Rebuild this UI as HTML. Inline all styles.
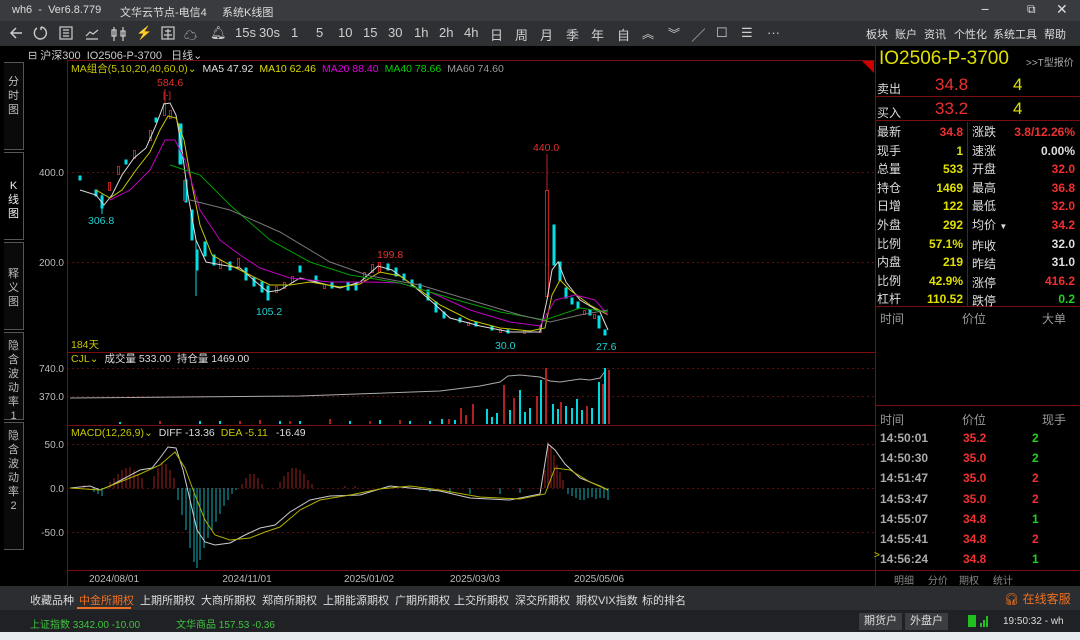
<!DOCTYPE html>
<html><head><meta charset="utf-8"><style>
*{margin:0;padding:0;box-sizing:border-box}
body{width:1080px;height:640px;background:#000;overflow:hidden;font-family:"Liberation Sans","Noto Sans CJK SC",sans-serif;position:relative;color:#ccc}
.a{position:absolute;white-space:nowrap}
#title{left:0;top:0;width:1080px;height:21px;background:#393b3f;font-size:11px;color:#ddd}
#tool{left:0;top:21px;width:1080px;height:25px;background:#2e3033;font-size:13px;color:#cfcfcf}
.tb{position:absolute;top:4px}
.rt{position:absolute;top:5px;font-size:11px;color:#ddd}
#tabs2{left:0;top:586px;width:1080px;height:24px;background:#2b2d30;font-size:11px;color:#ddd}
#stat{left:0;top:610px;width:1080px;height:22px;background:#1f2124;font-size:10px;color:#3fc43f}
.vt{position:absolute;left:4px;width:20px;font-size:11px;color:#bbb;text-align:center;line-height:14px;border:1px solid #555;border-left:none;background:#0a0a0a}
.r{position:absolute;font-size:12px}
</style></head><body>
<div class="a" id="title">
 <span class="a" style="left:12px;top:4px">wh6 &nbsp;- &nbsp;Ver6.8.779</span>
 <span class="a" style="left:120px;top:4px">文华云节点-电信4</span>
 <span class="a" style="left:222px;top:4px">系统K线图</span>
 <span class="a" style="left:981px;top:1px;font-size:14px">−</span>
 <span class="a" style="left:1027px;top:2px;font-size:12px">⧉</span>
 <span class="a" style="left:1056px;top:1px;font-size:14px">✕</span>
</div>
<div class="a" id="tool">
 <svg class="a" style="left:8px;top:4px" width="16" height="16" fill="none" stroke="#ccc" stroke-width="1.5"><path d="M14 8H3M8 3L3 8l5 5"/></svg>
 <svg class="a" style="left:32px;top:4px" width="16" height="16" fill="none" stroke="#ccc" stroke-width="1.4"><path d="M5 3A6 6 0 1 0 9 2M9 2v3"/></svg>
 <svg class="a" style="left:58px;top:4px" width="16" height="16" fill="none" stroke="#ccc" stroke-width="1.2"><rect x="2" y="2" width="12" height="12"/><path d="M5 5h6M5 8h6M5 11h6"/></svg>
 <svg class="a" style="left:84px;top:4px" width="16" height="16" fill="none" stroke="#ccc" stroke-width="1.2"><path d="M2 11l4-4 3 2 5-4M2 14h12"/></svg>
 <svg class="a" style="left:110px;top:4px" width="18" height="16" fill="none" stroke="#ccc" stroke-width="1.2"><rect x="2" y="5" width="4" height="6"/><path d="M4 2v14M13 2v14"/><rect x="11" y="6" width="4" height="5"/></svg>
 <span class="tb" style="left:136px">⚡</span>
 <svg class="a" style="left:160px;top:4px" width="16" height="16" fill="none" stroke="#ccc" stroke-width="1.2"><rect x="2" y="2" width="12" height="12"/><path d="M5 6h6M8 4v10M4 10h8"/></svg>
 <span class="tb" style="left:184px">☁</span>
 <span class="tb" style="left:210px">🔔︎</span>
 <span class="tb" style="left:235px">15s</span><span class="tb" style="left:259px">30s</span><span class="tb" style="left:291px">1</span><span class="tb" style="left:316px">5</span><span class="tb" style="left:338px">10</span><span class="tb" style="left:363px">15</span><span class="tb" style="left:388px">30</span><span class="tb" style="left:414px">1h</span><span class="tb" style="left:439px">2h</span><span class="tb" style="left:464px">4h</span><span class="tb" style="left:490px">日</span><span class="tb" style="left:515px">周</span><span class="tb" style="left:540px">月</span><span class="tb" style="left:566px">季</span><span class="tb" style="left:591px">年</span><span class="tb" style="left:617px">自</span>
 <span class="tb" style="left:642px;font-size:12px">︽</span><span class="tb" style="left:668px;font-size:12px">︾</span><span class="tb" style="left:692px">╱</span><span class="tb" style="left:716px">☐</span><span class="tb" style="left:741px">☰</span><span class="tb" style="left:767px">···</span>
 <span class="rt" style="left:866px">板块</span><span class="rt" style="left:895px">账户</span><span class="rt" style="left:924px">资讯</span><span class="rt" style="left:954px">个性化</span><span class="rt" style="left:993px">系统工具</span><span class="rt" style="left:1044px">帮助</span>
</div>
<div class="a" style="left:28px;top:47px;font-size:11px;color:#ccc">⊟ 沪深300 &nbsp;IO2506-P-3700 &nbsp;&nbsp;日线⌄</div>
<div class="vt" style="top:62px;height:88px;padding-top:12px">分<br>时<br>图</div>
<div class="vt" style="top:152px;height:88px;padding-top:26px;color:#eee;background:#000">K<br>线<br>图</div>
<div class="vt" style="top:242px;height:88px;padding-top:24px">释<br>义<br>图</div>
<div class="vt" style="top:332px;height:88px;padding-top:6px">隐<br>含<br>波<br>动<br>率<br>1</div>
<div class="vt" style="top:422px;height:128px;padding-top:6px">隐<br>含<br>波<br>动<br>率<br>2</div>
<svg class="a" style="left:0;top:0" width="1080" height="640" font-family="Liberation Sans, Noto Sans CJK SC, sans-serif">
 <g stroke="#7a0d0d" fill="none">
  <path d="M67.5 60V586M67.5 60.5H875M875.5 46V586M67 352.5H875M67 425.5H875M67 570.5H875"/>
  <path d="M875 306.5H1080M875 405.5H1080M875 96.5H1080M875 120.5H1080M967.5 122V306M875 570.5H1080"/>
 </g>
 <g stroke="#5a1010" stroke-dasharray="2 3"><path d="M67 172.5H875M67 262.5H875M67 368.5H875M67 396.5H875M67 444.5H875M67 488.5H875M67 532.5H875"/></g>
 <path d="M862 61h12v12z" fill="#c00"/>
 <g font-size="10" fill="#bbb" text-anchor="end"><text x="64" y="176">400.0</text><text x="64" y="266">200.0</text><text x="64" y="372">740.0</text><text x="64" y="400">370.0</text><text x="64" y="448">50.0</text><text x="64" y="492">0.0</text><text x="64" y="536">-50.0</text></g>
 <g font-size="10" fill="#bbb" text-anchor="middle"><text x="114" y="582">2024/08/01</text><text x="247" y="582">2024/11/01</text><text x="369" y="582">2025/01/02</text><text x="475" y="582">2025/03/03</text><text x="599" y="582">2025/05/06</text></g>
 <text x="71" y="72" font-size="10.5"><tspan fill="#c8c800">MA组合(5,10,20,40,60,0)⌄</tspan><tspan fill="#ddd" dx="6">MA5 47.92</tspan><tspan fill="#dddd00" dx="6">MA10 62.46</tspan><tspan fill="#e000e0" dx="6">MA20 88.40</tspan><tspan fill="#00d000" dx="6">MA40 78.66</tspan><tspan fill="#999" dx="6">MA60 74.60</tspan></text>
 <text x="71" y="348" font-size="10.5" fill="#c8c800">184天</text>
 <text x="71" y="362" font-size="10.5"><tspan fill="#c8c800">CJL⌄</tspan><tspan fill="#ddd" dx="6">成交量 533.00 &#160;持仓量 1469.00</tspan></text>
 <text x="71" y="436" font-size="10.5"><tspan fill="#c8c800">MACD(12,26,9)⌄</tspan><tspan fill="#ddd" dx="6">DIFF -13.36</tspan><tspan fill="#c8c800" dx="6">DEA -5.11</tspan><tspan fill="#ddd" dx="8">-16.49</tspan></text>
 <g font-size="10.5"><text x="157" y="86" fill="#e03030">584.6</text><text x="163" y="98" fill="#e03030" font-size="9">[-]</text><text x="88" y="224" fill="#20d0d0">306.8</text><text x="256" y="315" fill="#20d0d0">105.2</text><text x="377" y="258" fill="#e03030">199.8</text><text x="533" y="151" fill="#e03030">440.0</text><text x="495" y="349" fill="#20d0d0">30.0</text><text x="596" y="350" fill="#20d0d0">27.6</text></g>
 <g fill="#00e0e8" stroke="#00e0e8" stroke-width="1">
  <rect x="79" y="176" width="2" height="4"/><rect x="95" y="190" width="2" height="6"/><rect x="101" y="196" width="2" height="12"/><path d="M102 194V214"/>
  <rect x="125" y="160" width="2" height="4"/><rect x="155" y="118" width="2" height="4"/>
  <rect x="179" y="124" width="3" height="40"/><rect x="185" y="180" width="2" height="22"/><rect x="191" y="210" width="2" height="30"/><rect x="196" y="250" width="2" height="20"/><path d="M196 240V296"/>
  <rect x="204" y="242" width="2" height="14"/><rect x="213" y="255" width="2" height="10"/><rect x="229" y="262" width="2" height="8"/><rect x="245" y="268" width="2" height="12"/><rect x="253" y="278" width="2" height="8"/><rect x="261" y="282" width="2" height="10"/><rect x="267" y="286" width="2" height="14"/>
  <rect x="299" y="266" width="2" height="6"/><rect x="315" y="276" width="2" height="6"/><rect x="331" y="282" width="2" height="6"/><rect x="347" y="282" width="2" height="8"/><rect x="355" y="284" width="2" height="6"/>
  <rect x="387" y="264" width="2" height="6"/><rect x="395" y="268" width="2" height="8"/><rect x="403" y="274" width="2" height="6"/><rect x="411" y="280" width="2" height="6"/><rect x="419" y="284" width="2" height="6"/><rect x="427" y="290" width="2" height="10"/><rect x="435" y="302" width="2" height="10"/><rect x="443" y="312" width="2" height="6"/><rect x="459" y="318" width="2" height="4"/><rect x="475" y="322" width="2" height="4"/><rect x="491" y="326" width="2" height="4"/><rect x="507" y="330" width="2" height="3"/>
  <rect x="553" y="225" width="2" height="40"/><rect x="559" y="262" width="2" height="18"/><rect x="565" y="288" width="2" height="10"/><rect x="571" y="298" width="2" height="6"/><rect x="577" y="302" width="2" height="6"/><rect x="589" y="310" width="2" height="5"/><rect x="598" y="316" width="2" height="12"/><rect x="604" y="330" width="2" height="5"/>
 </g>
 <g fill="none" stroke="#c02020" stroke-width="1">
  <rect x="108.5" y="182.5" width="2" height="8"/><rect x="117.5" y="166.5" width="2" height="8"/><rect x="133.5" y="150.5" width="2" height="8"/><rect x="149.5" y="130.5" width="2" height="10"/><rect x="163.5" y="103.5" width="2" height="12"/><path d="M165 89V104"/><rect x="169.5" y="110.5" width="2" height="8"/>
  <rect x="183.5" y="180.5" width="2" height="20"/><rect x="219.5" y="260.5" width="2" height="8"/><rect x="237.5" y="258.5" width="2" height="8"/>
  <rect x="275.5" y="286.5" width="2" height="6"/><rect x="283.5" y="282.5" width="2" height="6"/><rect x="291.5" y="276.5" width="2" height="6"/><rect x="323.5" y="284.5" width="2" height="4"/><rect x="363.5" y="272.5" width="2" height="8"/><rect x="371.5" y="264.5" width="2" height="8"/><rect x="378.5" y="262.5" width="2" height="10"/>
  <rect x="467.5" y="322.5" width="2" height="3"/><rect x="499.5" y="329.5" width="2" height="3"/><rect x="523.5" y="330.5" width="2" height="3"/><rect x="539.5" y="326.5" width="2" height="6"/>
  <rect x="545.5" y="190.5" width="3" height="106"/><path d="M547 154V190"/><rect x="583.5" y="310.5" width="2" height="4"/><rect x="593.5" y="314.5" width="2" height="4"/>
 </g>
 <g fill="none" stroke-width="1">
  <polyline stroke="#dcdcdc" points="80,190 96,195 104,205 112,195 122,175 134,158 146,148 156,125 164,104 170,103 176,115 182,150 188,195 196,240 206,262 222,265 240,268 256,282 268,292 280,290 300,278 320,283 340,288 360,282 378,266 392,270 410,283 430,300 450,318 480,326 510,332 540,332 547,300 552,270 558,262 566,282 580,300 600,312 608,330"/>
  <polyline stroke="#c8c800" points="96,190 110,198 122,190 136,170 150,152 160,130 168,116 176,118 184,140 192,185 200,225 212,255 230,265 250,275 270,285 290,285 310,282 340,287 360,284 380,272 400,276 420,290 440,305 470,320 500,328 530,331 545,328 552,295 560,280 570,290 590,305 608,315"/>
  <polyline stroke="#c000c0" points="110,200 130,190 150,170 165,140 175,140 185,160 200,210 220,240 240,255 260,268 290,278 330,282 370,282 400,283 430,292 470,310 510,322 540,326 555,300 575,295 595,300 608,315"/>
  <polyline stroke="#00a000" points="170,165 200,175 230,205 270,240 310,262 350,275 400,283 450,298 500,312 545,320 580,308 608,312"/>
  <polyline stroke="#777" points="190,200 230,210 280,232 330,262 370,276 420,285 470,300 520,315 550,322 580,315 608,310"/>
 </g>
 <polyline fill="none" stroke="#aaa" points="70,398 300,396 440,391 480,386 500,382 508,376 520,375 540,377 550,381 560,382 580,379 590,380 600,378 606,370"/>
 <g stroke-width="2">
  <path stroke="#b02020" d="M160 424V421M240 424V421M260 424V420M290 424V421M330 424V419M370 424V421M400 424V420M449 424V419M461 424V408M466 424V415M473 424V404M504 424V385M514 424V398M537 424V396M546 424V368M561 424V402M587 424V406M603 424V384M609 424V370"/>
  <path stroke="#00d8e0" d="M120 424V422M200 424V421M220 424V421M280 424V421M300 424V421M350 424V421M380 424V420M410 424V421M430 424V421M442 424V419M455 424V420M487 424V409M492 424V417M497 424V413M510 424V410M520 424V390M525 424V412M530 424V408M541 424V380M553 424V404M558 424V409M566 424V406M572 424V408M577 424V399M582 424V410M592 424V408M599 424V382M605 424V368"/>
 </g>
 <g stroke-width="1">
  <path stroke="#a02020" d="M84 488V485M110 488V482M114 488V478M118 488V474M122 488V470M126 488V468M130 488V467M134 488V470M138 488V474M142 488V478M154 488V476M158 488V468M162 488V462M166 488V464M170 488V470M174 488V478M242 488V484M246 488V478M250 488V474M254 488V474M258 488V478M262 488V484M280 488V482M284 488V476M288 488V472M292 488V468M296 488V468M300 488V470M304 488V474M308 488V480M312 488V484M345 488V486M355 488V486M545 488V470M548 488V442M551 488V446M554 488V455M557 488V465M560 488V472M563 488V480"/>
  <path stroke="#10b0b8" d="M94 488V492M98 488V494M102 488V496M178 488V500M182 488V515M186 488V530M190 488V548M194 488V562M197 488V568M200 488V560M204 488V548M208 488V538M212 488V530M216 488V522M220 488V514M224 488V506M228 488V500M232 488V494M236 488V490M420 488V490M430 488V492M450 488V493M470 488V494M500 488V494M520 488V493M568 488V494M572 488V496M576 488V498M580 488V500M584 488V500M588 488V498M592 488V497M596 488V499M600 488V498M604 488V498M608 488V500"/>
  <polyline fill="none" stroke="#ccc" points="70,488 90,486 100,490 110,486 125,478 140,470 152,468 160,458 168,447 176,448 183,470 190,500 197,530 205,542 215,545 230,543 245,535 260,528 275,525 290,512 310,500 330,496 360,495 390,486 410,488 440,491 470,498 510,500 540,494 548,444 555,450 565,464 580,478 600,486 608,490"/>
  <polyline fill="none" stroke="#b0b000" points="70,488 100,490 120,482 140,474 160,465 175,452 185,468 195,495 205,520 215,535 230,540 250,538 265,532 280,527 300,510 320,500 350,495 380,489 410,486 440,490 480,497 520,499 545,494 555,468 570,470 590,482 608,490"/>
 </g>
</svg>
<div class="a" style="left:879px;top:48px;font-size:19px;color:#e0e000">IO2506-P-3700</div>
<div class="a" style="left:1026px;top:54px;font-size:10px;color:#aaa">&gt;&gt;T型报价</div>
<div class="r" style="left:877px;top:80px;color:#ddd">卖出</div><div class="r" style="left:935px;top:75px;font-size:17px;color:#f03030">34.8</div><div class="r" style="left:1013px;top:75px;font-size:17px;color:#e0e000">4</div>
<div class="r" style="left:877px;top:104px;color:#ddd">买入</div><div class="r" style="left:935px;top:99px;font-size:17px;color:#f03030">33.2</div><div class="r" style="left:1013px;top:99px;font-size:17px;color:#e0e000">4</div>
<div class="a" style="left:877px;top:123px;width:200px;font-size:12px;line-height:18.6px">
<div style="position:absolute;left:0;color:#ddd">最新<br>现手<br>总量<br>持仓<br>日增<br>外盘<br>比例<br>内盘<br>比例<br>杠杆</div>
<div style="position:absolute;right:114px;text-align:right;font-weight:bold;color:#e0e000"><span style="color:#f03030">34.8</span><br>1<br>533<br>1469<br>122<br>292<br>57.1%<br>219<br>42.9%<br>110.52</div>
<div style="position:absolute;left:95px;color:#ddd">涨跌<br>速涨<br>开盘<br>最高<br>最低<br>均价 <span style="font-size:8px">▼</span><br>昨收<br>昨结<br>涨停<br>跌停</div>
<div style="position:absolute;right:2px;text-align:right;font-weight:bold;color:#f03030">3.8/12.26%<br><span style="color:#ddd">0.00%</span><br>32.0<br>36.8<br>32.0<br>34.2<br><span style="color:#ddd">32.0</span><br><span style="color:#ddd">31.0</span><br>416.2<br><span style="color:#20d020">0.2</span></div>
</div>
<div class="r" style="left:880px;top:310px;color:#999">时间</div><div class="r" style="left:962px;top:310px;color:#999">价位</div><div class="r" style="left:1042px;top:310px;color:#999">大单</div>
<div class="r" style="left:880px;top:411px;color:#999">时间</div><div class="r" style="left:962px;top:411px;color:#999">价位</div><div class="r" style="left:1042px;top:411px;color:#999">现手</div>
<div class="a" style="left:879px;top:428px;font-size:12px;line-height:20.2px;font-weight:bold;width:200px">
<div style="position:absolute;left:1px;color:#aaa">14:50:01<br>14:50:30<br>14:51:47<br>14:53:47<br>14:55:07<br>14:55:41<br>14:56:24</div>
<div style="position:absolute;left:84px;color:#f03030">35.2<br>35.0<br>35.0<br>35.0<br>34.8<br>34.8<br>34.8</div>
<div style="position:absolute;left:153px;color:#f03030"><span style="color:#20d020">2</span><br><span style="color:#20d020">2</span><br>2<br>2<br><span style="color:#20d020">1</span><br>2<br><span style="color:#20d020">1</span></div>
</div>
<div class="a" style="left:874px;top:550px;font-size:10px;color:#c8c800">&gt;</div>
<div class="a" style="left:894px;top:572px;font-size:10px;color:#888">明细 &nbsp;&nbsp;&nbsp;&nbsp;分价 &nbsp;&nbsp;&nbsp;期权 &nbsp;&nbsp;&nbsp;&nbsp;统计</div>
<div class="a" id="tabs2">
 <span class="a" style="left:30px;top:6px">收藏品种</span>
 <span class="a" style="left:79px;top:6px;color:#f07020">中金所期权</span><div class="a" style="left:77px;top:21px;width:54px;height:2px;background:#f07020"></div>
 <span class="a" style="left:140px;top:6px">上期所期权</span><span class="a" style="left:201px;top:6px">大商所期权</span><span class="a" style="left:262px;top:6px">郑商所期权</span><span class="a" style="left:323px;top:6px">上期能源期权</span><span class="a" style="left:395px;top:6px">广期所期权</span><span class="a" style="left:454px;top:6px">上交所期权</span><span class="a" style="left:515px;top:6px">深交所期权</span><span class="a" style="left:576px;top:6px">期权VIX指数</span><span class="a" style="left:642px;top:6px">标的排名</span>
 <span class="a" style="left:1004px;top:4px;color:#f07020;font-size:12px">🎧︎ 在线客服</span>
</div>
<div class="a" id="stat">
 <span class="a" style="left:30px;top:6px">上证指数 3342.00 -10.00</span>
 <span class="a" style="left:176px;top:6px">文华商品 157.53 -0.36</span>
 <span class="a" style="left:859px;top:3px;width:43px;height:17px;background:#3b3d41;color:#ddd;font-size:11px;text-align:center;line-height:17px">期货户</span>
 <span class="a" style="left:905px;top:3px;width:43px;height:17px;background:#3b3d41;color:#ddd;font-size:11px;text-align:center;line-height:17px">外盘户</span>
 <div class="a" style="left:968px;top:5px;width:8px;height:12px;background:#20c020"></div>
 <div class="a" style="left:980px;top:13px;width:2px;height:4px;background:#20c020"></div><div class="a" style="left:983px;top:10px;width:2px;height:7px;background:#20c020"></div><div class="a" style="left:986px;top:6px;width:2px;height:11px;background:#20c020"></div>
 <span class="a" style="left:1003px;top:6px;color:#ddd">19:50:32 - wh</span>
</div>
<div class="a" style="left:0;top:632px;width:1080px;height:8px;background:#e8ecef"></div>
</body></html>
